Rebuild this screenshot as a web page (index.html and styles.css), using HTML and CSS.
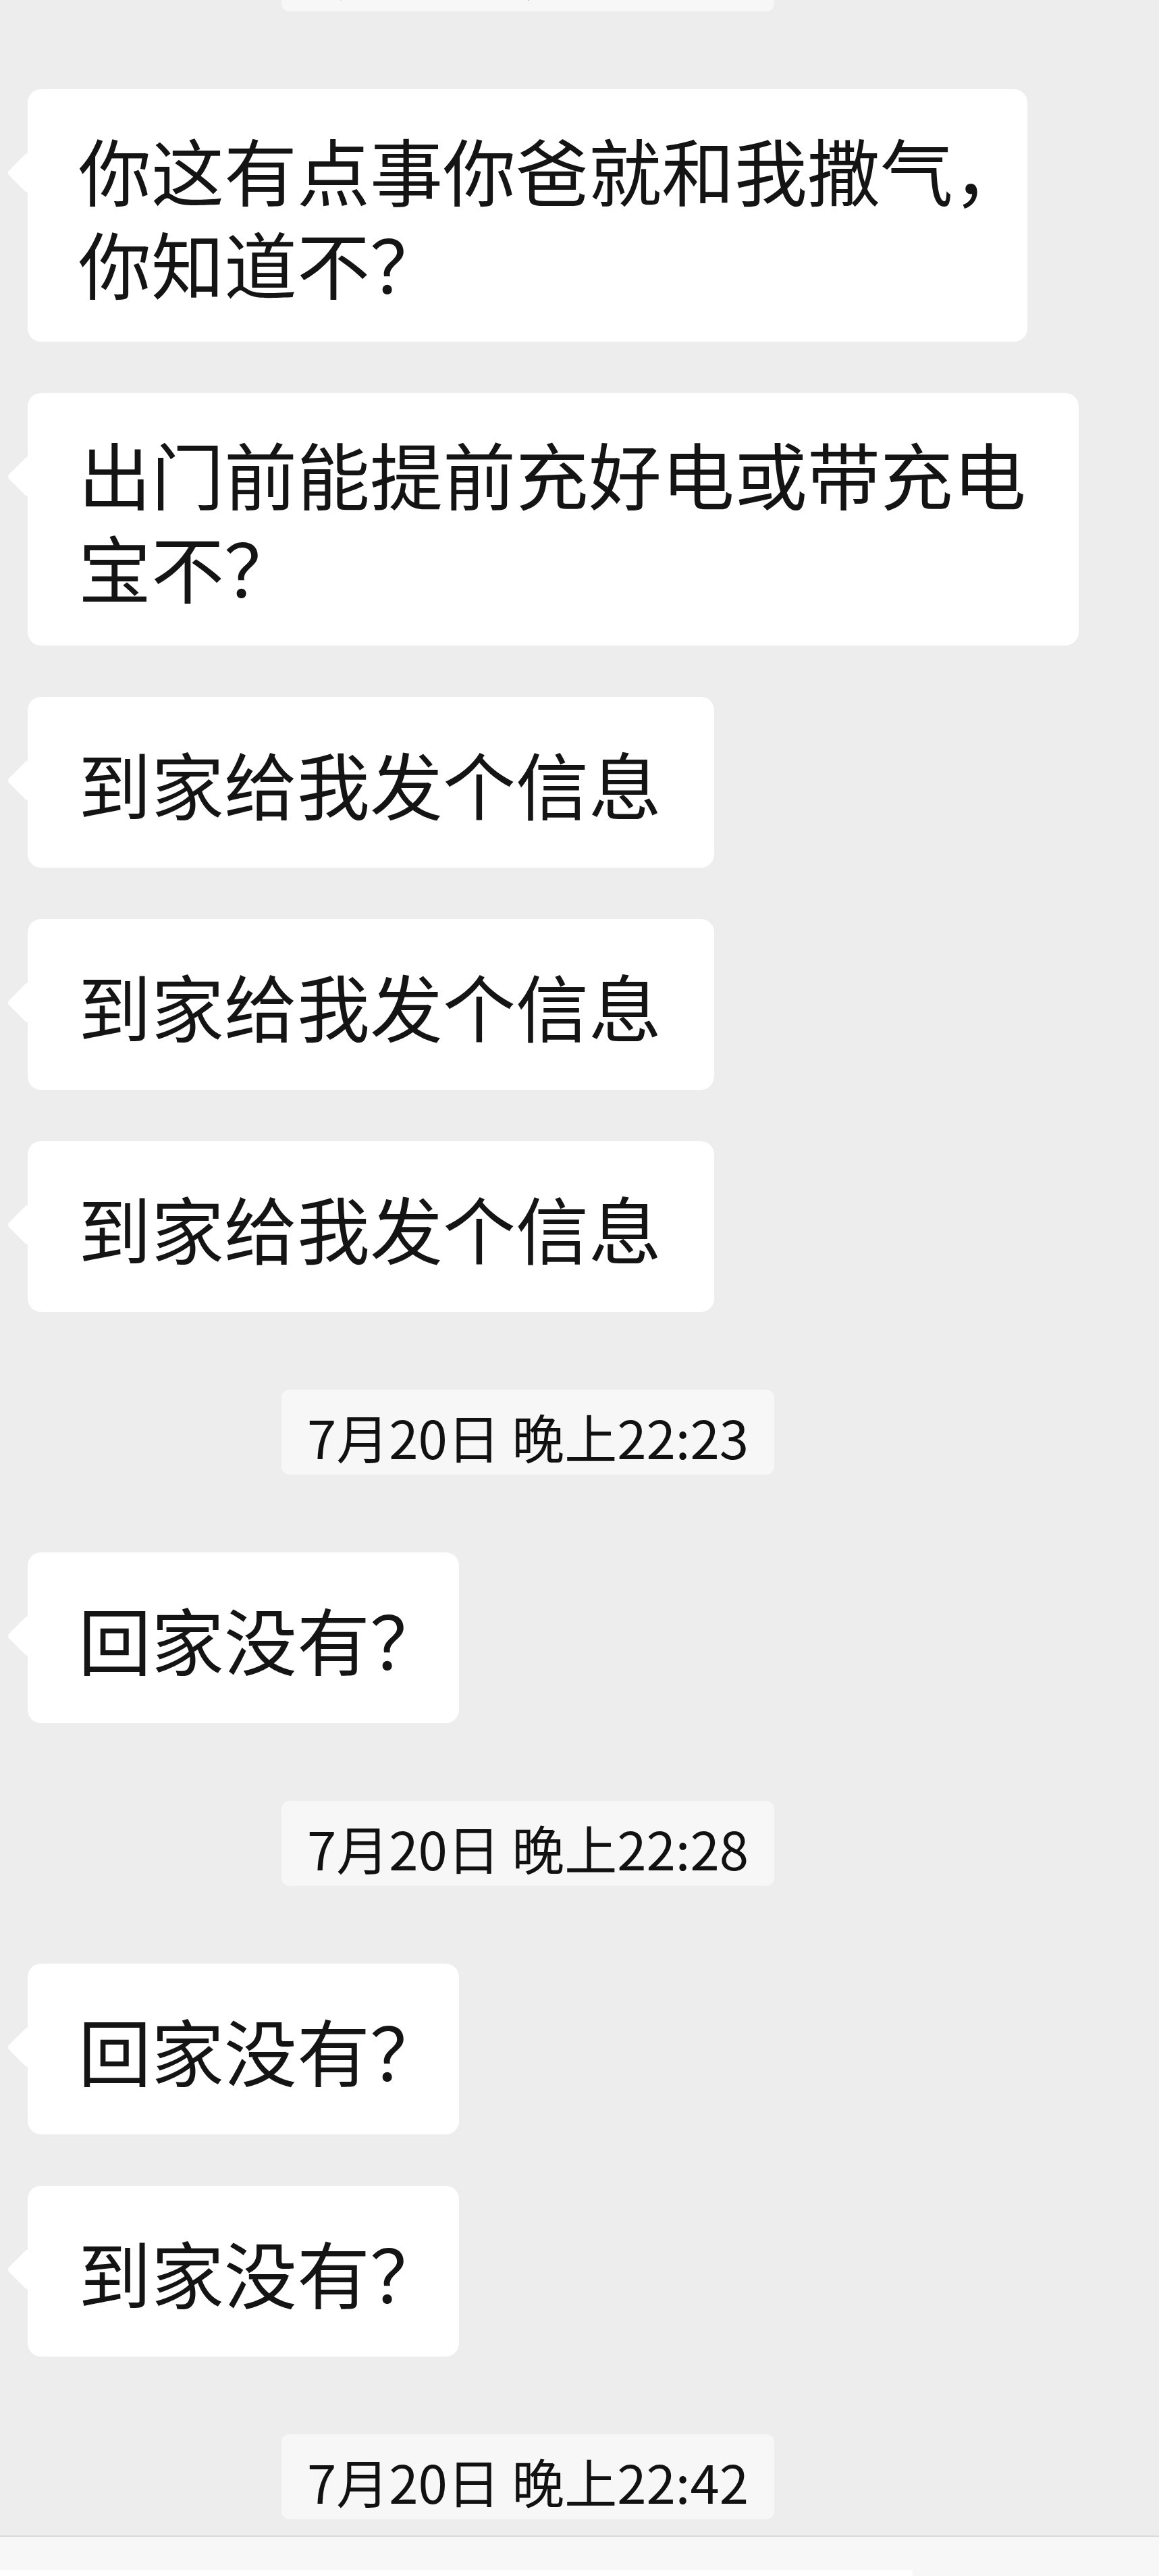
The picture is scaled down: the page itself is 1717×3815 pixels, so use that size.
FILE: index.html
```html
<!DOCTYPE html>
<html lang="zh-CN">
<head>
<meta charset="utf-8">
<title>聊天记录</title>
<link rel="stylesheet" href="styles.css">
</head>
<body>
  <main class="chat">
    <div class="time time-first">7月20日 晚上22:18</div>
    <div class="bubble multi">你这有点事你爸就和我撒气<span class="punct comma">，</span><br>你知道不<span class="punct">？</span></div>
    <div class="bubble multi">出门前能提前充好电或带充电<br>宝不<span class="punct">？</span></div>
    <div class="bubble">到家给我发个信息</div>
    <div class="bubble">到家给我发个信息</div>
    <div class="bubble">到家给我发个信息</div>
    <div class="time">7月20日 晚上22:23</div>
    <div class="bubble">回家没有<span class="punct">？</span></div>
    <div class="time">7月20日 晚上22:28</div>
    <div class="bubble">回家没有<span class="punct">？</span></div>
    <div class="bubble">到家没有<span class="punct">？</span></div>
    <div class="time">7月20日 晚上22:42</div>
  </main>
  <footer class="input-bar">
    <div class="input-strip"></div>
  </footer>
</body>
</html>
```

FILE: styles.css
```css
* {
  box-sizing: border-box;
}

html, body {
  margin: 0;
  padding: 0;
}

body {
  width: 1717px;
  height: 3815px;
  overflow: hidden;
  background: #ededed;
  font-family: "Noto Sans CJK SC", "Noto Sans", sans-serif;
  color: #141414;
  display: flex;
  flex-direction: column;
}

.chat {
  flex: 1;
  min-height: 0;
  width: 1564px;
  padding: 0 41px;
  display: flex;
  flex-direction: column;
  align-items: flex-start;
  gap: 76px;
}

.bubble {
  position: relative;
  background: #ffffff;
  border-radius: 20px;
  font-size: 108px;
  line-height: 138px;
  padding: 58px 78px 57px 75px;
  white-space: nowrap;
  flex-shrink: 0;
}

.bubble.multi {
  padding-top: 49px;
  padding-bottom: 49px;
}

.bubble::before {
  content: "";
  position: absolute;
  left: -22px;
  top: 102px;
  width: 44px;
  height: 44px;
  background: #ffffff;
  border-radius: 5px;
  transform: rotate(45deg);
}

.punct {
  font-feature-settings: "halt" 1;
}

.comma {
  margin-right: -22px;
}

.time {
  align-self: center;
  flex-shrink: 0;
  background: #f7f7f7;
  border-radius: 12px;
  font-size: 78px;
  line-height: 94px;
  padding: 22px 38px 10px 38px;
  white-space: nowrap;
  margin: 39px 0;
  color: #111111;
}

.time-first {
  margin-top: -109px;
}

.input-bar {
  position: relative;
  z-index: 1;
  flex: 0 0 60px;
  background: #f7f7f7;
  border-top: 2px solid #dadada;
  display: flex;
  flex-direction: column;
  justify-content: flex-end;
}

.input-strip {
  width: 1352px;
  height: 9px;
  background: #ffffff;
}
```
